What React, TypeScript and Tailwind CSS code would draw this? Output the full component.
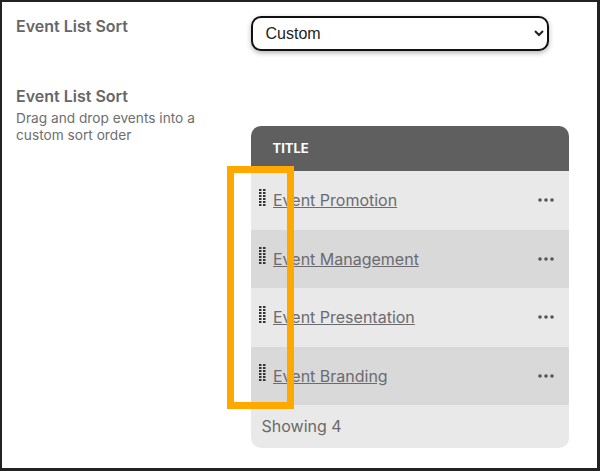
const events = ["Event Promotion", "Event Management", "Event Presentation", "Event Branding"];

function Grip() {
  return (
    <svg width="7" height="17" viewBox="0 0 7 17" className="shrink-0 fill-[#333333]">
      {[0, 3, 6, 9, 12, 15].map((y) => (
        <g key={y}>
          <rect x="0" y={y} width="2.5" height="2" />
          <rect x="4" y={y} width="2.5" height="2" />
        </g>
      ))}
    </svg>
  );
}

function Dots() {
  return (
    <svg width="16" height="4" viewBox="0 0 16 4" className="fill-[#555555]">
      <circle cx="2" cy="2" r="1.8" />
      <circle cx="8" cy="2" r="1.8" />
      <circle cx="14" cy="2" r="1.8" />
    </svg>
  );
}

export default function App() {
  return (
    <div className="relative w-[600px] h-[471px] overflow-hidden bg-white border-t-2 border-l-2 border-r-[3px] border-b-[3px] border-[#222222] font-['Inter',sans-serif]">
      <div className="flex pl-[14px] pt-[14px]">
        <div className="w-[234.5px] flex flex-col">
          <h3 className="text-[16px] leading-[20px] font-semibold text-[#666666]">Event List Sort</h3>
          <h3 className="mt-[50px] text-[16px] leading-[20px] font-semibold text-[#666666]">Event List Sort</h3>
          <p className="mt-[4px] w-[200px] text-[13.7px] leading-[17px] text-[#6e6e6e]">
            Drag and drop events into a custom sort order
          </p>
        </div>

        <div className="w-[318px] flex flex-col">
          <select
            defaultValue="Custom"
            className="w-[298.5px] h-[35px] pl-[9px] pr-[1px] bg-white border-2 border-[#111111] rounded-[10px] shadow-[0_2px_5px_rgba(0,0,0,0.3)] text-[16px] text-[#222222] font-['Liberation_Sans',sans-serif]"
          >
            <option>Custom</option>
          </select>

          <div className="mt-[75px] rounded-[10px] overflow-hidden bg-[#e9e9e9]">
            <div className="h-[45px] flex items-center pl-[22px] bg-[#5f5f5f] text-[13px] font-bold text-white">TITLE</div>
            {events.map((name, i) => (
              <div key={name} className={`h-[58.5px] flex items-center justify-between pl-[8.5px] pr-[15px] ${i % 2 === 1 ? "bg-[#d9d9d9]" : "bg-[#e9e9e9]"}`}>
                <div className="flex items-center gap-[7px]">
                  <span className="-mt-[6px]"><Grip /></span>
                  <a href="#" className="text-[16px] text-[#6b6b70] underline">{name}</a>
                </div>
                <Dots />
              </div>
            ))}
            <div className="h-[43px] flex items-center pl-[11px] pb-[1px] text-[16px] text-[#6a6a6a]">Showing 4</div>
          </div>
        </div>
      </div>

      <div className="absolute left-[225px] top-[164px] w-[67px] h-[243px] border-[7.5px] border-[#ffa800]" />
    </div>
  );
}
